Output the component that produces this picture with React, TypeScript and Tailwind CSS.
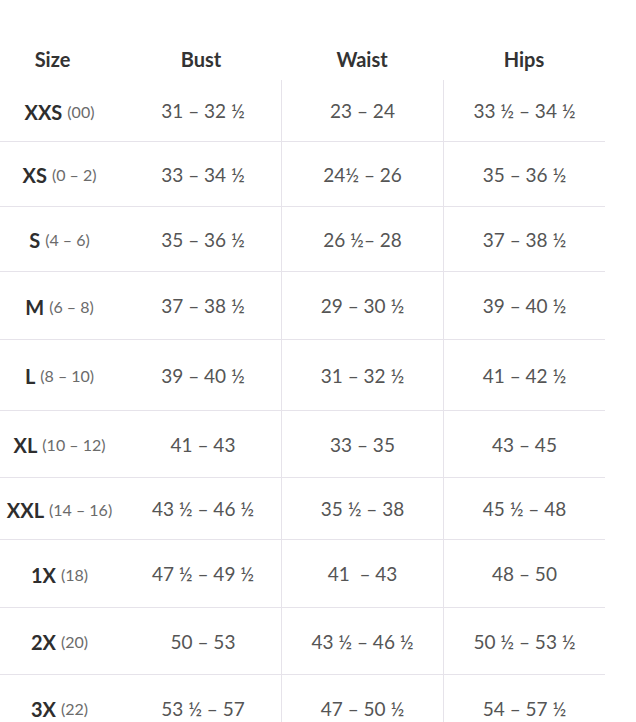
const rows = [
  { size: "XXS", num: "(00)", bust: "31 – 32 ½", waist: "23 – 24", hips: "33 ½ – 34 ½", h: "h-[62px]" },
  { size: "XS", num: "(0 – 2)", bust: "33 – 34 ½", waist: "24½ – 26", hips: "35 – 36 ½", h: "h-[65px]" },
  { size: "S", num: "(4 – 6)", bust: "35 – 36 ½", waist: "26 ½– 28", hips: "37 – 38 ½", h: "h-[65px]" },
  { size: "M", num: "(6 – 8)", bust: "37 – 38 ½", waist: "29 – 30 ½", hips: "39 – 40 ½", h: "h-[68px]" },
  { size: "L", num: "(8 – 10)", bust: "39 – 40 ½", waist: "31 – 32 ½", hips: "41 – 42 ½", h: "h-[71px]" },
  { size: "XL", num: "(10 – 12)", bust: "41 – 43", waist: "33 – 35", hips: "43 – 45", h: "h-[67px]" },
  { size: "XXL", num: "(14 – 16)", bust: "43 ½ – 46 ½", waist: "35 ½ – 38", hips: "45 ½ – 48", h: "h-[62px]" },
  { size: "1X", num: "(18)", bust: "47 ½ – 49 ½", waist: "41  – 43", hips: "48 – 50", h: "h-[68px]" },
  { size: "2X", num: "(20)", bust: "50 – 53", waist: "43 ½ – 46 ½", hips: "50 ½ – 53 ½", h: "h-[67px]" },
  { size: "3X", num: "(22)", bust: "53 ½ – 57", waist: "47 – 50 ½", hips: "54 – 57 ½", h: "h-[66px]" }
];

export default function App() {
  return (
    <div className="min-h-[722px] bg-white font-['Lato','Liberation_Sans',sans-serif] overflow-hidden">
      <div className="w-[605px]">
        <div className="grid h-[80px] grid-cols-[125px_156px_162px_162px] items-end pb-[6px] text-[20px] font-bold text-[#333333]">
          <div className="pr-[20px] text-center">Size</div>
          <div className="pr-[4px] text-center">Bust</div>
          <div className="text-center">Waist</div>
          <div className="text-center">Hips</div>
        </div>
        {rows.map((r, i) => (
          <div
            key={r.size}
            className={`grid grid-cols-[125px_156px_162px_162px] text-[19px] text-[#555555] ${r.h} ${
              i < rows.length - 1 ? "border-b border-[#e6e3ea]" : ""
            }`}
          >
            <div className="flex items-center justify-center gap-[5px] pr-[6px] pt-[2px] whitespace-nowrap">
              <span className="text-[20px] font-bold text-[#2e2e2e]">{r.size}</span>
              <span className="text-[16px] text-[#6b6b6b]">{r.num}</span>
            </div>
            <div className="flex items-center justify-center pt-[2px] whitespace-pre">{r.bust}</div>
            <div className="flex items-center justify-center pt-[2px] whitespace-pre border-l border-[#e6e3ea]">{r.waist}</div>
            <div className="flex items-center justify-center pt-[2px] whitespace-pre border-l border-[#e6e3ea]">{r.hips}</div>
          </div>
        ))}
      </div>
    </div>
  );
}
